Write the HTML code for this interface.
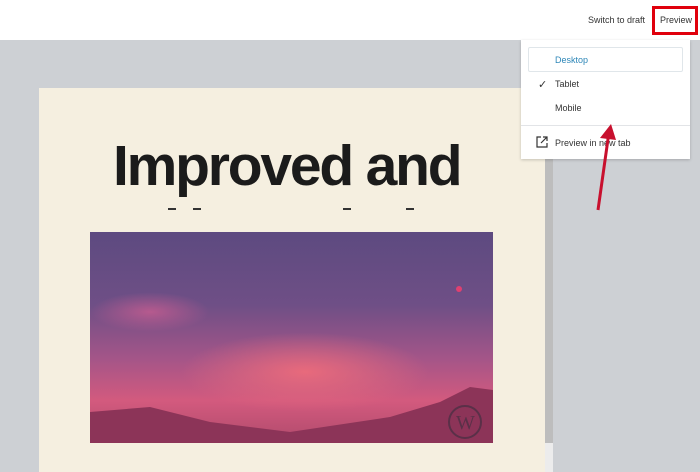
<!DOCTYPE html>
<html><head><style>
body{margin:0;width:700px;height:472px;overflow:hidden;background:#cdd0d4;font-family:"Liberation Sans",sans-serif;position:relative}
.top{position:absolute;left:0;top:0;width:700px;height:40px;background:#fff}
.t{position:absolute;font-size:9px;color:#333}
</style></head><body>
<div class="top"></div>
<div class="t" style="left:588px;top:15px">Switch to draft</div>
<div style="position:absolute;left:652px;top:6px;width:40px;height:23px;border:3px solid #e0000c;background:#fff"></div>
<div class="t" style="left:660px;top:15px">Preview</div>
<div style="position:absolute;left:39px;top:88px;width:506px;height:384px;background:#f5efe0"></div>
<div style="position:absolute;left:545px;top:40px;width:8px;height:403px;background:#bdbdbd"></div>
<div style="position:absolute;left:545px;top:443px;width:8px;height:29px;background:#ececec"></div>
<div style="position:absolute;left:113px;top:131px;font-size:57px;font-weight:bold;letter-spacing:-2.2px;color:#1b1b1b;line-height:70px;white-space:nowrap">Improved and</div>
<div style="position:absolute;left:168px;top:208px;width:8px;height:1.5px;background:#333"></div>
<div style="position:absolute;left:193px;top:208px;width:8px;height:1.5px;background:#333"></div>
<div style="position:absolute;left:343px;top:208px;width:8px;height:1.5px;background:#333"></div>
<div style="position:absolute;left:406px;top:208px;width:8px;height:1.5px;background:#333"></div>
<div style="position:absolute;left:90px;top:232px;width:403px;height:211px;background:linear-gradient(180deg,#5d4a80 0%,#6f4f86 35%,#a45588 60%,#d35a7e 80%,#b04a6c 100%)">
<div style="position:absolute;left:0;top:60px;width:120px;height:40px;background:radial-gradient(ellipse,#b65a8e 0%,transparent 70%)"></div>
<div style="position:absolute;left:90px;top:100px;width:250px;height:80px;background:radial-gradient(ellipse,#e86a7c 0%,transparent 70%)"></div>
<svg width="403" height="211" style="position:absolute;left:0;top:0"><path d="M0 180 L60 175 L120 190 L200 200 L300 185 L350 170 L380 155 L403 158 L403 211 L0 211Z" fill="#8c3458"/><circle cx="369" cy="57" r="3" fill="#e04070"/><circle cx="375" cy="190" r="16" fill="none" stroke="#5a3048" stroke-width="2"/><text x="366" y="197" font-family="Liberation Serif" font-size="20" fill="#5a3048">W</text></svg>
</div>
<div style="position:absolute;left:521px;top:40px;width:169px;height:119px;background:#fff;box-shadow:0 1px 3px rgba(0,0,0,.2)"></div>
<div style="position:absolute;left:528px;top:47px;width:155px;height:25px;border:1px solid #e0e6ea;border-radius:2px;box-sizing:border-box"></div>
<div class="t" style="left:555px;top:55px;color:#2e87b8">Desktop</div>
<div class="t" style="left:538px;top:78px;font-size:11px">✓</div>
<div class="t" style="left:555px;top:79px">Tablet</div>
<div class="t" style="left:555px;top:103px">Mobile</div>
<div style="position:absolute;left:521px;top:125px;width:169px;height:1px;background:#e2e4e7"></div>
<svg style="position:absolute;left:536px;top:136px" width="12" height="12"><path d="M5 1H1v10h10V7M7 1h4v4M11 1L5 7" fill="none" stroke="#333" stroke-width="1.2"/></svg>
<div class="t" style="left:555px;top:138px">Preview in new tab</div>
<svg style="position:absolute;left:590px;top:118px" width="30" height="96"><path d="M8 92 L19 14" stroke="#c8102e" stroke-width="3"/><path d="M10 20 L21 6 L26 22Z" fill="#c8102e"/></svg>
</body></html>
